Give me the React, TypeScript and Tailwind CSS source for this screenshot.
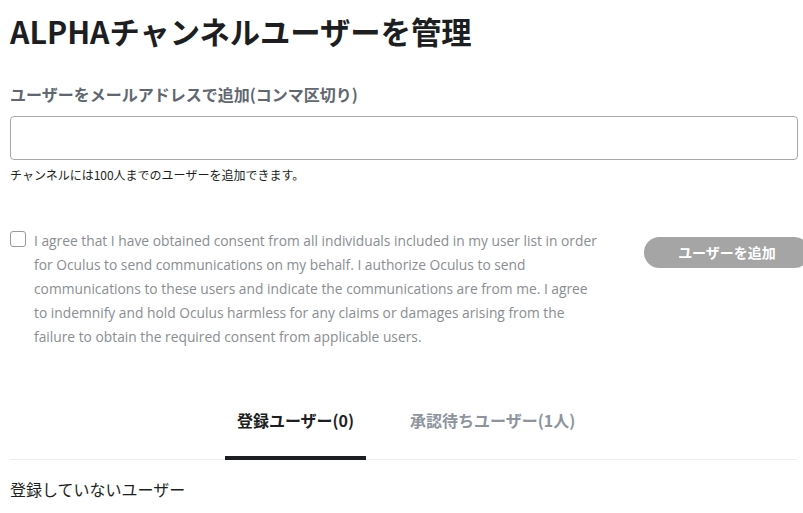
import React from "react";

const jp = { fontFamily: '"Noto Sans CJK JP", "Noto Sans", sans-serif' };
const en = { fontFamily: '"Open Sans", "Noto Sans CJK JP", sans-serif' };

export default function App() {
  return (
    <div className="w-[803px] h-[513px] overflow-hidden bg-white" style={jp}>
      <div className="pl-[10px] pr-[6px] pt-[10px]">
        <h1 className="text-[30.3px] leading-[42px] font-bold text-[#1c1e21]">
          ALPHAチャンネルユーザーを管理
        </h1>
        <div className="mt-[31px] text-[16px] leading-[22px] font-bold text-[#606770]">
          ユーザーをメールアドレスで追加(コンマ区切り)
        </div>
        <div className="mt-[11px] h-[44px] w-[788px] rounded-[4px] border border-[#a8a8a8] bg-white" />
        <div className="mt-[7px] text-[12px] leading-[16px] text-[#1c1e21]">
          チャンネルには100人までのユーザーを追加できます。
        </div>
        <div className="mt-[46px] flex items-start">
          <div className="mt-[2px] h-[16px] w-[16px] shrink-0 rounded-[3px] border border-[#9a9a9a] bg-white" />
          <p
            className="ml-[8px] w-[570px] shrink-0 whitespace-nowrap text-[13.8px] leading-[24px] text-[#8a8d91]"
            style={en}
          >
            I agree that I have obtained consent from all individuals included in my user list in order
            <br />
            for Oculus to send communications on my behalf. I authorize Oculus to send
            <br />
            communications to these users and indicate the communications are from me. I agree
            <br />
            to indemnify and hold Oculus harmless for any claims or damages arising from the
            <br />
            failure to obtain the required consent from applicable users.
          </p>
          <button className="ml-[40px] mt-[8px] h-[31px] w-[166px] shrink-0 rounded-full bg-[#a5a5a5] text-[14px] font-bold text-white">
            ユーザーを追加
          </button>
        </div>
        <div className="mt-[49px] flex border-b border-[#ebedf0] w-[787px]">
          <div className="ml-[215px] w-[141px] flex flex-col items-center">
            <div className="h-[58px] pt-[10px] text-[16px] leading-[24px] font-bold text-[#1c1e21]">
              登録ユーザー(0)
            </div>
            <div className="h-[4px] w-full bg-[#1c1e21] -mb-[1px]" />
          </div>
          <div className="ml-[44px] h-[58px] pt-[10px] text-[16px] leading-[24px] font-bold text-[#8d949e]">
            承認待ちユーザー(1人)
          </div>
        </div>
        <div className="mt-[18px] text-[16px] leading-[22px] text-[#1c1e21]">
          登録していないユーザー
        </div>
      </div>
    </div>
  );
}
